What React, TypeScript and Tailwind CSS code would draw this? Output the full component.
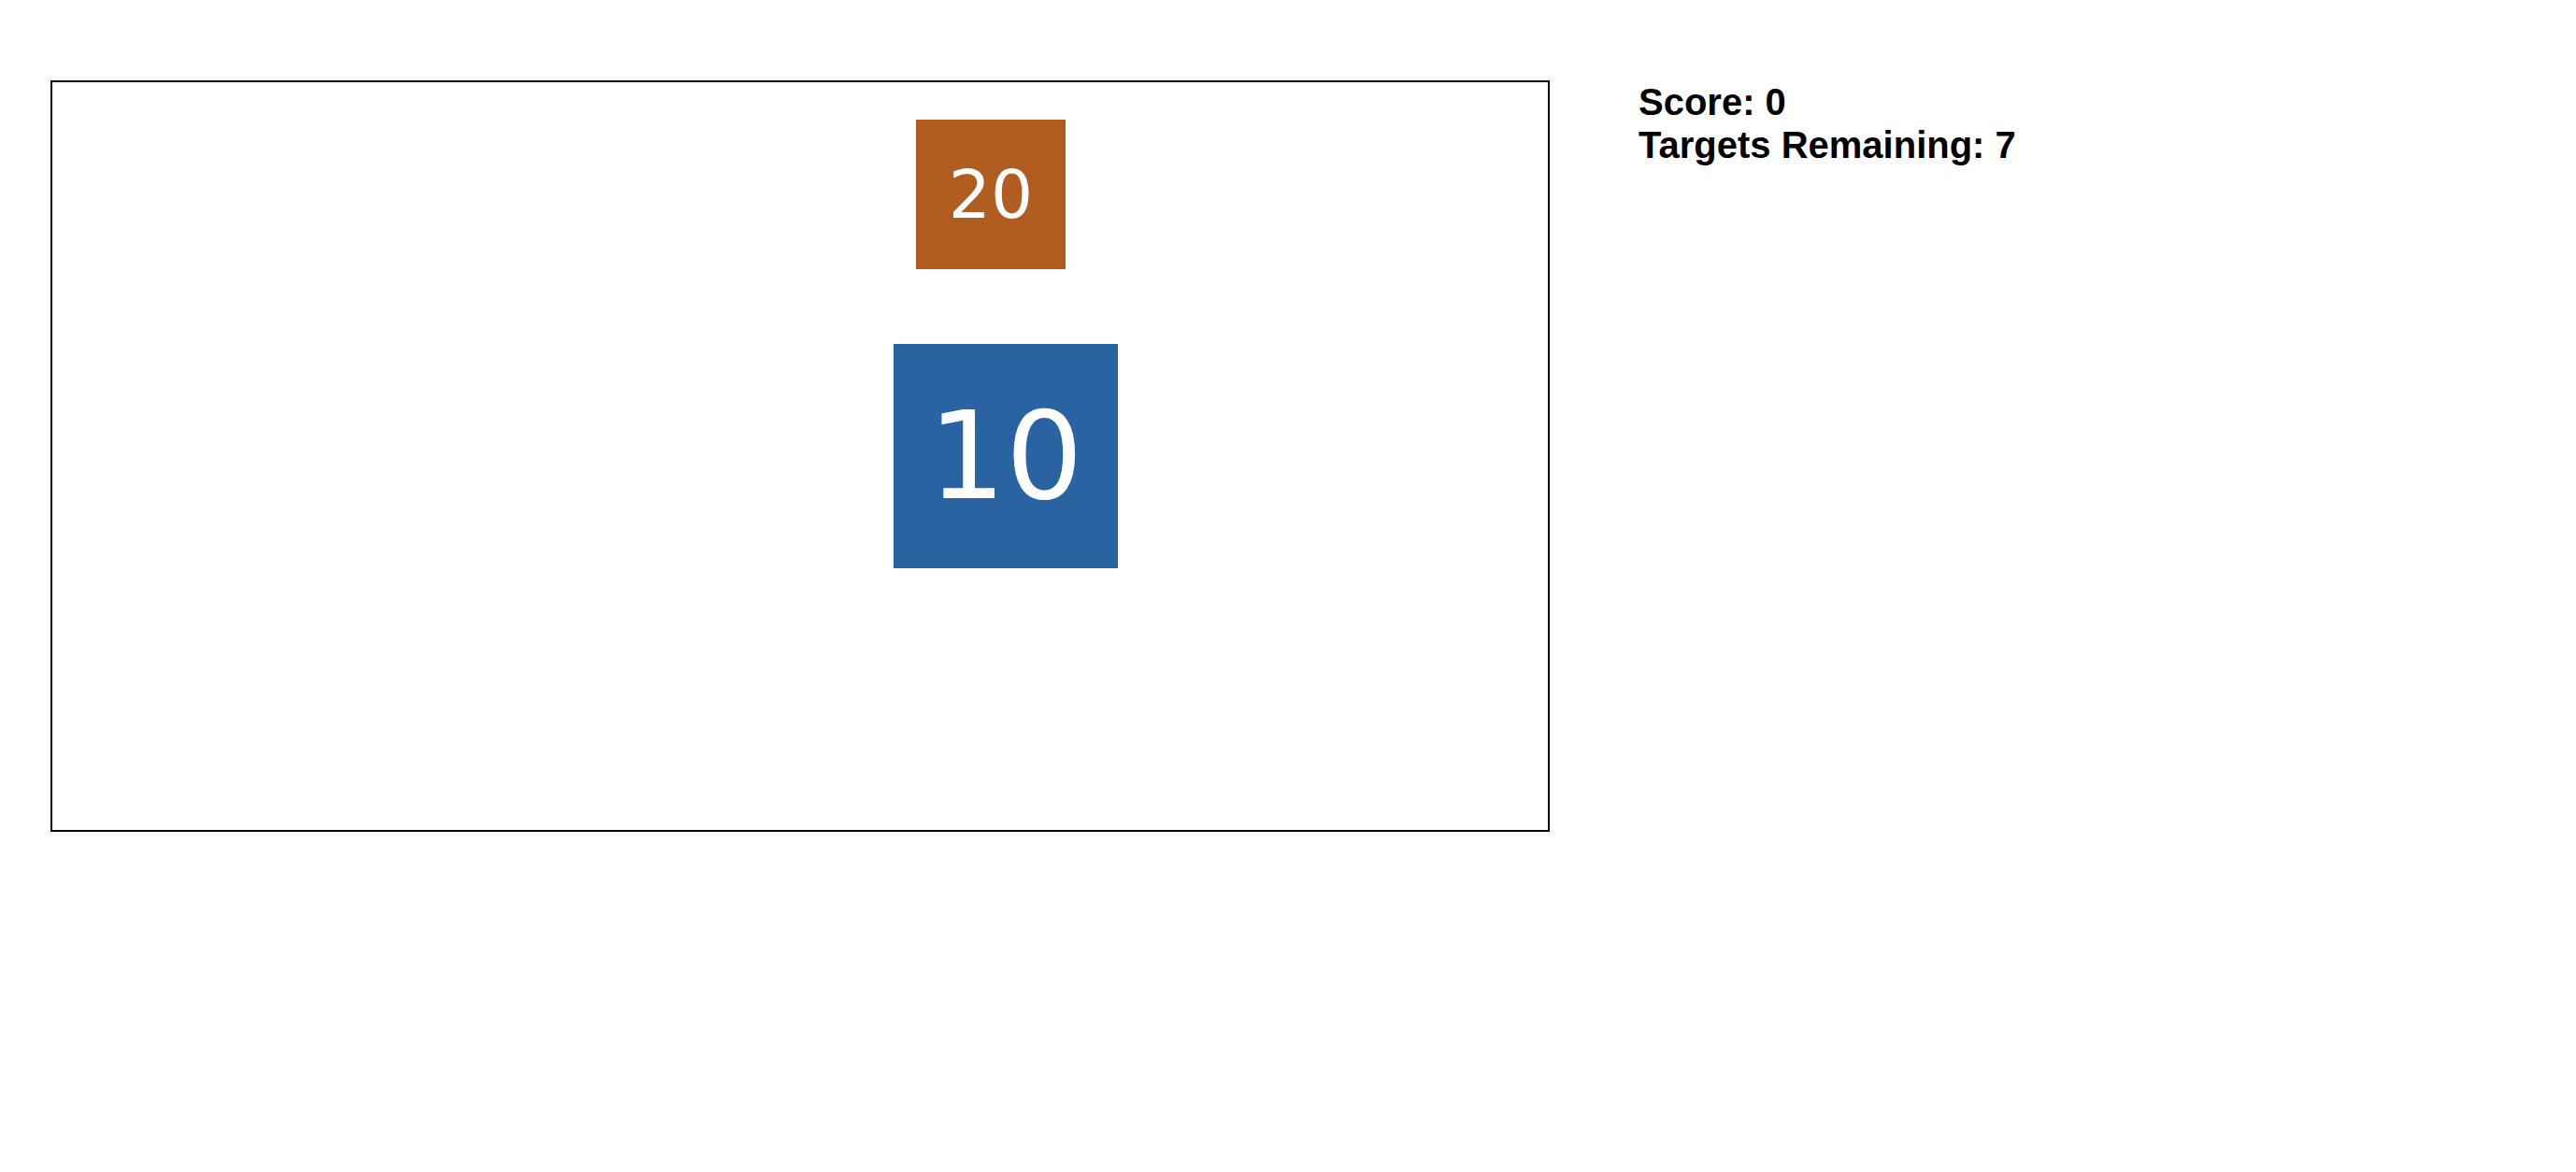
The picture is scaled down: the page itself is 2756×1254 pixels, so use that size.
import React from 'react';

interface Target {
    value: number;
    x: number;
    y: number;
    size: number;
    color: string;
    fontSize: string;
}

const targets: Target[] = [
    { value: 20, x: 924, y: 40, size: 160, color: 'bg-[#b15d22]', fontSize: 'text-[71px]' },
    { value: 10, x: 900, y: 280, size: 240, color: 'bg-[#2a63a1]', fontSize: 'text-[130px]' }
];

export default function App() {
    const score = 0;
    const remaining = 7;

    return (
        <div className="min-h-screen bg-white flex items-start gap-[95px] pl-[54px] pt-[86px]">
            <div className="relative w-[1604px] h-[804px] border-2 border-black shrink-0">
                {targets.map((t) => (
                    <div
                        key={t.value}
                        className={`absolute flex items-center justify-center text-white leading-none ${t.color} ${t.fontSize}`}
                        style={{ left: t.x, top: t.y, width: t.size, height: t.size, fontFamily: '"DejaVu Sans", sans-serif' }}
                    >
                        {t.value}
                    </div>
                ))}
            </div>
            <div className="font-['Liberation_Sans',Arial,sans-serif] font-bold text-[40px] leading-[46px] text-black">
                <div>Score: {score}</div>
                <div>Targets Remaining: {remaining}</div>
            </div>
        </div>
    );
}
